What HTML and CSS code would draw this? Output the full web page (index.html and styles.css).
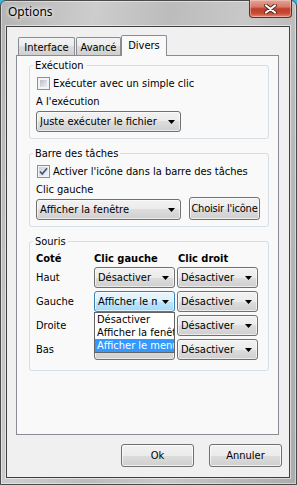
FILE: index.html
```html
<!DOCTYPE html>
<html lang="fr">
<head>
    <meta charset="UTF-8">
    <title>Options</title>
    <link rel="stylesheet" href="styles.css">
</head>
<body>
    <div class="window">
        <div class="titlebar">
            <span class="title">Options</span>
            <span class="close">
                <svg width="13" height="10" viewBox="0 0 13 10">
                    <path d="M2 1.5 L11 8.5 M11 1.5 L2 8.5" stroke="#5a2a22" stroke-width="4" stroke-linecap="round"/>
                    <path d="M2 1.5 L11 8.5 M11 1.5 L2 8.5" stroke="#fff" stroke-width="2.2" stroke-linecap="round"/>
                </svg>
            </span>
        </div>
        <div class="client">
            <div class="tabs">
                <div class="tab t-interface">Interface</div>
                <div class="tab t-avance">Avancé</div>
                <div class="tab t-divers active">Divers</div>
            </div>
            <div class="panel">
                <fieldset class="group">
                    <legend>Exécution</legend>
                    <div class="check"><span class="box"></span>Exécuter avec un simple clic</div>
                    <div class="caption">A l'exécution</div>
                    <div class="combo wide"><span class="val">Juste exécuter le fichier</span><span class="arrow"></span></div>
                </fieldset>

                <fieldset class="group">
                    <legend>Barre des tâches</legend>
                    <div class="check"><span class="box checked">
                        <svg width="9" height="9" viewBox="0 0 9 9"><path d="M1 4.5 L3.3 7 L8 1.3" fill="none" stroke="#3f5485" stroke-width="1.7"/></svg>
                    </span>Activer l'icône dans la barre des tâches</div>
                    <div class="caption">Clic gauche</div>
                    <div class="row">
                        <div class="combo wide"><span class="val">Afficher la fenêtre</span><span class="arrow"></span></div>
                        <div class="btn icon-btn">Choisir l'icône</div>
                    </div>
                </fieldset>

                <fieldset class="group">
                    <legend>Souris</legend>
                    <div class="mouse">
                        <div class="head">Coté</div>
                        <div class="head">Clic gauche</div>
                        <div class="head right">Clic droit</div>

                        <div class="side">Haut</div>
                        <div class="combo"><span class="val">Désactiver</span><span class="arrow"></span></div>
                        <div class="combo"><span class="val">Désactiver</span><span class="arrow"></span></div>

                        <div class="side">Gauche</div>
                        <div class="drop">
                            <div class="combo focus"><span class="val">Afficher le menu</span><span class="arrow"></span></div>
                            <div class="list">
                                <div class="item">Désactiver</div>
                                <div class="item">Afficher la fenêtre</div>
                                <div class="item selected">Afficher le menu</div>
                            </div>
                        </div>
                        <div class="combo"><span class="val">Désactiver</span><span class="arrow"></span></div>

                        <div class="side">Droite</div>
                        <div class="combo"><span class="val">Désactiver</span><span class="arrow"></span></div>
                        <div class="combo"><span class="val">Désactiver</span><span class="arrow"></span></div>

                        <div class="side">Bas</div>
                        <div class="combo"><span class="val">Désactiver</span><span class="arrow"></span></div>
                        <div class="combo"><span class="val">Désactiver</span><span class="arrow"></span></div>
                    </div>
                </fieldset>
            </div>
            <div class="buttons">
                <div class="btn dlg">Ok</div>
                <div class="btn dlg">Annuler</div>
            </div>
        </div>
    </div>
</body>
</html>
```

FILE: styles.css
```css
* {
    box-sizing: border-box;
}
body {
    margin: 0;
    width: 297px;
    height: 485px;
    overflow: hidden;
    background: #3fb6d8;
    font-family: "DejaVu Sans Condensed", "DejaVu Sans", sans-serif;
    font-size: 11px;
    color: #000;
}
.window {
    height: 485px;
    display: flex;
    flex-direction: column;
    border: 1px solid #4b4b4b;
    border-radius: 6px 6px 0 0;
    background: linear-gradient(100deg, #b4b4b4 0%, #cdcdcd 25%, #bcbcbc 45%, #c8c8c8 65%, #acacac 100%);
    box-shadow: inset 0 0 0 1px rgba(255, 255, 255, 0.45);
}
.titlebar {
    height: 25px;
    display: flex;
    justify-content: space-between;
    align-items: flex-start;
}
.title {
    font-family: "Noto Sans", sans-serif;
    font-size: 12px;
    line-height: 16px;
    padding: 3px 0 0 7px;
    text-shadow: 0 0 6px #fff, 0 0 3px #fff;
}
.close {
    width: 43px;
    height: 18px;
    margin: -1px 4px 0 0;
    display: flex;
    align-items: center;
    justify-content: center;
    border: 1px solid #6a2a21;
    border-top: none;
    border-radius: 0 0 4px 4px;
    background: linear-gradient(#e4a497 0%, #d77a68 40%, #c13d29 52%, #c84a34 78%, #e08a72 100%);
    box-shadow: inset 0 0 0 1px rgba(255, 220, 210, 0.45);
}
.client {
    flex: 1;
    margin: 0 6px 6px 5px;
    border: 1px solid #3f3f3f;
    background: #f0f0f0;
    padding: 8px 7px 0 9px;
    box-shadow: 0 0 0 1px rgba(255, 255, 255, 0.5);
}
.tabs {
    height: 20px;
    display: flex;
    align-items: flex-end;
    padding-left: 2px;
}
.tab {
    height: 18px;
    border: 1px solid #898c95;
    border-bottom: none;
    border-radius: 2px 2px 0 0;
    background: linear-gradient(#f3f3f3 0%, #ebebeb 50%, #dddddd 50%, #cfcfcf 100%);
    text-align: center;
    line-height: 13px;
    padding-top: 3px;
}
.t-interface {
    width: 57px;
}
.t-avance {
    width: 45px;
    margin-left: 1px;
}
.t-divers {
    width: 46px;
}
.tab.active {
    height: 21px;
    margin-bottom: -1px;
    position: relative;
    z-index: 1;
    background: #f9f9f9;
    padding-top: 3px;
}
.panel {
    height: 380px;
    margin-right: 3px;
    border: 1px solid #898c95;
    background: #f9f9f9;
    padding: 3px 0 0 12px;
}
.group {
    width: 240px;
    margin: 0 0 8px 0;
    padding: 0 6px 6px 6px;
    border: 1px solid #d5dfe5;
    border-radius: 3px;
    min-width: 0;
}
.group legend {
    padding: 0 2px;
    margin-left: -3px;
    line-height: 13px;
}
.check {
    display: flex;
    align-items: center;
    height: 15px;
    margin-top: 4px;
}
.box {
    width: 13px;
    height: 13px;
    margin: 0 3px 0 1px;
    border: 1px solid #8e8f8f;
    padding: 2px;
    background: linear-gradient(135deg, #b9bec5, #eef0f2) content-box, #f4f4f4;
    display: flex;
    align-items: center;
    justify-content: center;
}
.box.checked {
    padding: 1px;
    background: linear-gradient(135deg, #cdd2d8, #f2f3f5) content-box, #f4f4f4;
}
.caption {
    line-height: 13px;
    margin-top: 4px;
}
.combo {
    height: 21px;
    display: flex;
    align-items: center;
    border: 1px solid #707070;
    border-radius: 3px;
    background: linear-gradient(#f2f2f2 0%, #ebebeb 50%, #dddddd 50%, #cfcfcf 100%);
    box-shadow: inset 0 0 0 1px rgba(255, 255, 255, 0.6);
    padding-left: 3px;
}
.combo.wide {
    width: 145px;
}
.group > .combo.wide {
    margin-top: 3px;
}
.combo .val {
    flex: 1;
    overflow: hidden;
    white-space: nowrap;
}
.arrow {
    width: 7px;
    height: 4px;
    margin: 1px 5px 0 5px;
    background: #000;
    clip-path: polygon(0 0, 100% 0, 50% 100%);
}
.combo.focus {
    border-color: #3c7fb1;
    background: linear-gradient(#eaf6fd 0%, #d9f0fc 50%, #bee6fd 50%, #a7d9f5 100%);
}
.row {
    display: flex;
    align-items: flex-end;
    margin-top: 1px;
}
.btn {
    border: 1px solid #707070;
    border-radius: 3px;
    background: linear-gradient(#f2f2f2 0%, #ebebeb 50%, #dddddd 50%, #cfcfcf 100%);
    box-shadow: inset 0 0 0 1px rgba(255, 255, 255, 0.7);
    display: flex;
    align-items: center;
    justify-content: center;
    white-space: nowrap;
}
.icon-btn {
    width: 71px;
    height: 23px;
    margin-left: 8px;
    letter-spacing: -0.2px;
    overflow: hidden;
}
.mouse {
    display: grid;
    grid-template-columns: 56px 81px 81px;
    column-gap: 2px;
    row-gap: 3px;
    margin-top: 4px;
    padding-bottom: 4px;
}
.head {
    font-weight: bold;
    line-height: 13px;
    margin-bottom: -1px;
}
.head.right {
    padding-left: 1px;
}
.side {
    display: flex;
    align-items: center;
}
.drop {
    position: relative;
    z-index: 2;
}
.list {
    position: absolute;
    top: 100%;
    left: 0;
    width: 81px;
    border: 1px solid #646464;
    background: #fff;
    overflow: hidden;
    white-space: nowrap;
}
.item {
    height: 13px;
    line-height: 13px;
    padding-left: 2px;
}
.item.selected {
    background: #3399ff;
    color: #fff;
}
.buttons {
    display: flex;
    justify-content: flex-end;
    gap: 15px;
    margin-top: 9px;
}
.btn.dlg {
    width: 73px;
    height: 23px;
}
```
